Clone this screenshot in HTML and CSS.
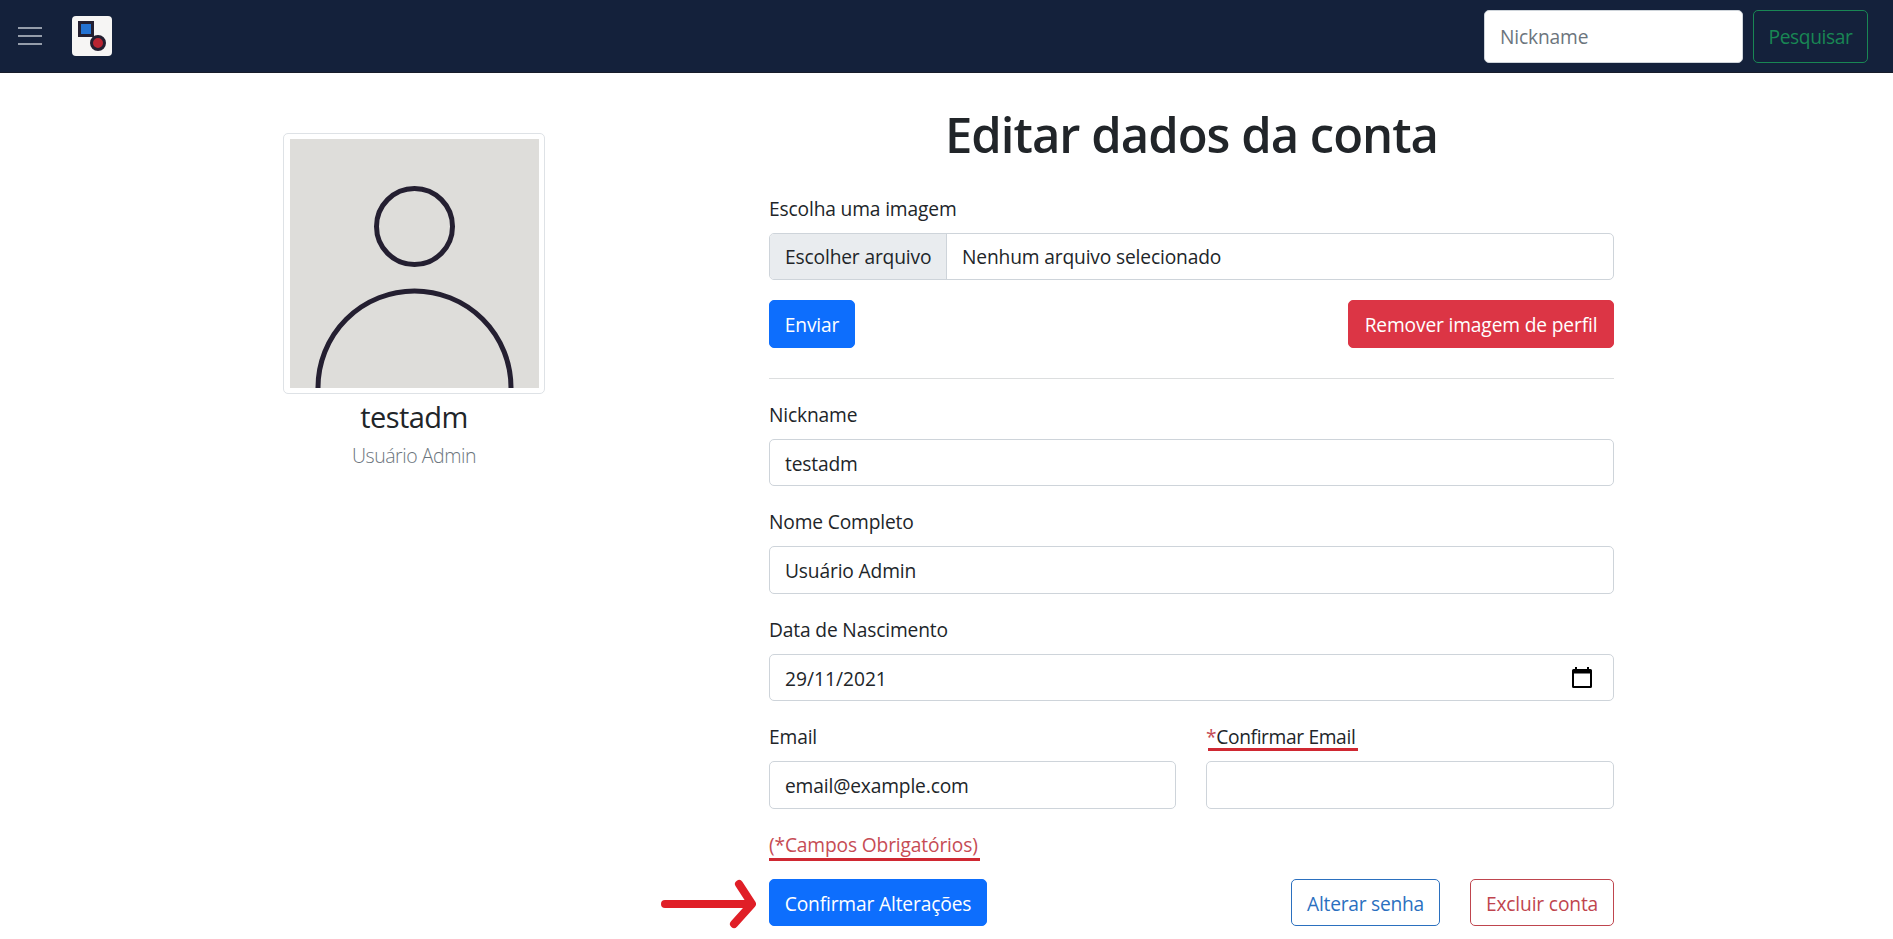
FILE: index.html
```html
<!DOCTYPE html>
<html lang="pt-BR">
<head>
<meta charset="utf-8">
<title>Editar dados da conta</title>
<link rel="stylesheet" href="styles.css">
</head>
<body>
<header class="navbar">
  <svg class="menu-icon" width="24" height="18" viewBox="0 0 24 18"><path d="M0 1h24M0 9h24M0 17h24" stroke="#959daa" stroke-width="2"/></svg>
  <svg class="logo" width="40" height="40" viewBox="0 0 40 40">
    <rect width="40" height="40" rx="4" fill="#f6f5f4"/>
    <rect x="7.5" y="6.5" width="13" height="13" fill="#2472d2" stroke="#241f31" stroke-width="3"/>
    <circle cx="26" cy="27" r="6.5" fill="#b92432" stroke="#241f31" stroke-width="3"/>
  </svg>
  <div class="search">
    <div class="search-input">Nickname</div>
    <div class="btn search-btn">Pesquisar</div>
  </div>
</header>
<main class="page">
  <aside class="profile">
    <div class="thumb">
      <svg width="249" height="249" viewBox="0 0 249 249">
        <rect width="249" height="249" fill="#deddda"/>
        <g fill="none" stroke="#241f31" stroke-width="5"><circle cx="124.5" cy="87.5" r="38"/><circle cx="124.5" cy="248.5" r="96.5"/></g>
      </svg>
    </div>
    <div class="nick">testadm</div>
    <div class="fullname">Usuário Admin</div>
  </aside>
  <section class="account">
    <h1 class="title">Editar dados da conta</h1>
    <div class="label">Escolha uma imagem</div>
    <div class="input file"><span class="file-btn">Escolher arquivo</span><span class="file-name">Nenhum arquivo selecionado</span></div>
    <div class="row image-actions">
      <div class="btn primary send">Enviar</div>
      <div class="btn danger">Remover imagem de perfil</div>
    </div>
    <div class="divider"></div>
    <div class="field"><div class="label">Nickname</div><div class="input short">testadm</div></div>
    <div class="field"><div class="label">Nome Completo</div><div class="input">Usuário Admin</div></div>
    <div class="field"><div class="label">Data de Nascimento</div>
      <div class="input date">29/11/2021
        <svg width="20" height="22" viewBox="0 0 20 22"><path fill-rule="evenodd" d="M3 0h2v2h10V0h2v2h1.5Q20 2 20 3.500V19.500Q20 21 18.500 21H1.500Q0 21 0 19.500V3.500Q0 2 1.500 2H3ZM2 6.500V19H18V6.500Z"/></svg>
      </div>
    </div>
    <div class="columns">
      <div class="field"><div class="label">Email</div><div class="input">email@example.com</div></div>
      <div class="field"><div class="label"><span class="marked confirm-label"><span class="star">*</span>Confirmar Email</span></div><div class="input"></div></div>
    </div>
    <div class="label required"><span class="marked required-label">(*Campos Obrigatórios)</span></div>
    <div class="row form-actions">
      <div class="btn primary confirm">Confirmar Alterações
        <svg class="arrow" width="100" height="52" viewBox="0 0 100 52"><g fill="none" stroke="#e01f27" stroke-linecap="round" stroke-linejoin="round" stroke-width="8"><path d="M5 26H91"/><path d="M79 6L92 26L74 46"/></g></svg>
      </div>
      <div class="row end">
        <div class="btn outline-blue">Alterar senha</div>
        <div class="btn outline-red">Excluir conta</div>
      </div>
    </div>
  </section>
</main>
</body>
</html>
```

FILE: styles.css
```css
* { box-sizing: border-box; }
body {
  margin: 0;
  height: 939px;
  overflow: hidden;
  background: #fff;
  color: #212529;
  font: 19.2px/30px "Open Sans", sans-serif;
  letter-spacing: -0.15px;
}
.navbar {
  display: flex;
  align-items: center;
  height: 73px;
  padding: 0 25px 0 18px;
  background: #14213b;
  border-bottom: 1px solid #171c2a;
}
.menu-icon { margin-right: 30px; }
.search { display: flex; gap: 10px; margin-left: auto; }
.search-input {
  width: 259px;
  height: 53px;
  padding: 11px 15px;
  background: #fff;
  border: 1px solid #ced4da;
  border-radius: 5px;
  color: #6c757d;
}
.page { display: flex; }
.profile {
  width: 262px;
  margin: 60px 224px 0 283px;
  display: flex;
  flex-direction: column;
  align-items: center;
}
.thumb {
  width: 262px;
  height: 261px;
  padding: 5px 6px;
  border: 1px solid #dee2e6;
  border-radius: 5px;
}
.thumb svg { display: block; }
.nick { margin-top: 2px; font-size: 29px; line-height: 42px; letter-spacing: -0.55px; }
.fullname { margin-top: 3px; font-size: 19.500px; font-weight: 300; line-height: 30px; letter-spacing: -0.45px; color: #6c757d; }
.account { width: 845px; padding-top: 31px; }
.title {
  margin: 0 0 30px;
  font-size: 49px;
  font-weight: 600;
  line-height: 60px;
  letter-spacing: -1px;
  text-align: center;
}
.label { height: 31px; margin-bottom: 8px; }
.input {
  height: 48px;
  padding: 9px 15px 0;
  border: 1px solid #ced4da;
  border-radius: 5px;
}
.short, .date { height: 47px; }
.file { display: flex; height: 47px; padding: 0; overflow: hidden; }
.file-btn {
  width: 177px;
  padding: 8px 0 0 15px;
  background: #e9ecef;
  border-right: 1px solid #ced4da;
}
.file-name { padding: 8px 0 0 15px; }
.row { display: flex; justify-content: space-between; }
.image-actions { margin-top: 20px; }
.btn {
  height: 47px;
  padding: 9px 0 0;
  border: 1px solid;
  border-radius: 5px;
  text-align: center;
  white-space: nowrap;
}
.image-actions .btn { height: 48px; }
.search-btn { width: 115px; height: 53px; padding-top: 11px; color: #198754; letter-spacing: -0.4px; }
.primary { background: #0d6efd; border-color: #0d6efd; color: #fff; }
.danger { width: 266px; background: #dc3545; border-color: #dc3545; color: #fff; }
.send { width: 86px; }
.confirm { position: relative; width: 218px; }
.divider { height: 1px; margin: 30px 0 21px; background: #dcdedf; }
.field { height: 107.300px; }
.date { display: flex; justify-content: space-between; padding-right: 21px; letter-spacing: 0; }
.date svg { margin-top: 3px; }
.columns { display: grid; grid-template-columns: 407px 408px; gap: 30px; }
.columns .field { height: 108px; }
.star, .required { color: #c64c55; }
.required { margin: 0 0 18px; }
.marked { position: relative; }
.marked::after {
  content: "";
  position: absolute;
  left: 0;
  top: 27px;
  width: 211px;
  height: 3px;
  background: #cf2832;
}
.confirm-label { letter-spacing: -0.36px; }
.confirm-label::after { left: 2px; top: 25px; width: 150px; }
.end { gap: 30px; }
.outline-blue { width: 149px; color: #2b70bf; letter-spacing: -0.24px; }
.outline-red { width: 144px; color: #bf454e; }
.arrow { position: absolute; left: -110px; top: -2px; }
```
